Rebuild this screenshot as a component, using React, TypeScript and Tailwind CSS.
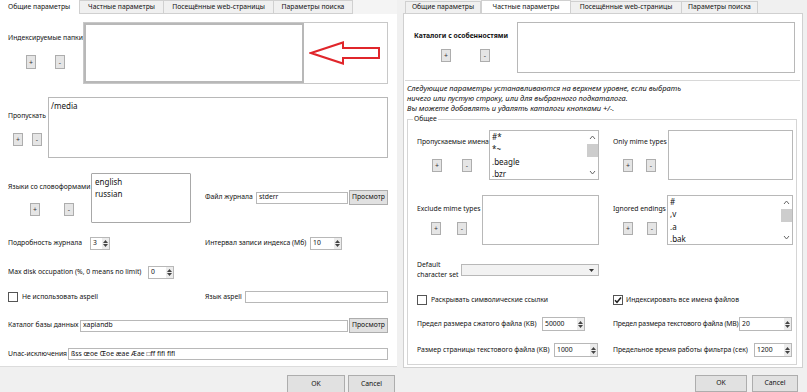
import React from "react";

function Btn({ children, className = "" }: { children: React.ReactNode; className?: string }) {
  return (
    <div
      className={`flex h-[13px] w-[10px] items-center justify-center border border-[#adadad] bg-[#e5e5e5] text-[7px] leading-none text-[#333] ${className}`}
    >
      {children}
    </div>
  );
}

function Input({ value = "", className = "" }: { value?: string; className?: string }) {
  return (
    <div
      className={`flex h-[12px] items-center overflow-hidden whitespace-nowrap border border-[#b8b8b8] bg-white pl-[2px] text-[6.8px] leading-none ${className}`}
    >
      {value}
    </div>
  );
}

function PushBtn({ label, className = "" }: { label: string; className?: string }) {
  return (
    <div
      className={`flex items-center justify-center border border-[#adadad] bg-[#e1e1e1] text-[6.8px] leading-none ${className}`}
    >
      {label}
    </div>
  );
}

function Spin({ value, className = "" }: { value: string; className?: string }) {
  return (
    <div className={`flex h-[13px] border border-[#b8b8b8] bg-white ${className}`}>
      <div className="flex flex-1 items-center pl-[2px] text-[6.8px] leading-none">{value}</div>
      <div className="flex w-[7px] flex-col items-center justify-center gap-[1px] bg-[#ececec]">
        <svg width="5" height="3" viewBox="0 0 5 3">
          <path d="M0 3 L2.5 0 L5 3 Z" fill="#444" />
        </svg>
        <svg width="5" height="3" viewBox="0 0 5 3">
          <path d="M0 0 L2.5 3 L5 0 Z" fill="#444" />
        </svg>
      </div>
    </div>
  );
}

function Check({ checked = false }: { checked?: boolean }) {
  return (
    <div className="flex h-[10px] w-[10px] items-center justify-center border border-[#555] bg-white">
      {checked && (
        <svg width="8" height="8" viewBox="0 0 8 8">
          <path d="M1 4.2 L3 6.3 L7 1.5" stroke="#222" strokeWidth="1.5" fill="none" />
        </svg>
      )}
    </div>
  );
}

function ScrollList({ items, className = "" }: { items: string[]; className?: string }) {
  return (
    <div className={`flex h-[50px] border border-[#b8b8b8] bg-white ${className}`}>
      <div className="flex-1 overflow-hidden pl-[2px] text-[8px] leading-[12.3px]">
        {items.map((it) => (
          <div key={it}>{it}</div>
        ))}
      </div>
      <div className="flex w-[12px] flex-col items-center bg-white">
        <svg width="7" height="9" viewBox="0 0 7 9" className="mt-[2px]">
          <path d="M1 6 L3.5 3 L6 6" stroke="#666" strokeWidth="1" fill="none" />
        </svg>
        <div className="mt-[2px] h-[13px] w-[11px] bg-[#cdcdcd]" />
        <div className="flex-1" />
        <svg width="7" height="9" viewBox="0 0 7 9" className="mb-[2px]">
          <path d="M1 3 L3.5 6 L6 3" stroke="#666" strokeWidth="1" fill="none" />
        </svg>
      </div>
    </div>
  );
}

const leftTabs = ["Частные параметры", "Посещённые web-страницы", "Параметры поиска"];

function LeftPanel() {
  return (
    <div className="flex h-[392px] w-[397px] flex-col bg-white">
      <div className="flex h-[14px] bg-[#f4f4f4] text-[6.8px]">
        <div className="flex w-[79px] items-center bg-white pl-[8px]">Общие параметры</div>
        <div className="flex w-[85px] items-center justify-center border border-[#d0d0d0] bg-[#f0f0f0]">
          {leftTabs[0]}
        </div>
        <div className="flex w-[110px] items-center justify-center border border-l-0 border-[#d0d0d0] bg-[#f0f0f0]">
          {leftTabs[1]}
        </div>
        <div className="flex w-[79px] items-center justify-center border border-l-0 border-[#d0d0d0] bg-[#f0f0f0]">
          {leftTabs[2]}
        </div>
      </div>

      <div className="flex flex-1 flex-col pl-[8px] text-[6.8px]">
        {/* indexed folders */}
        <div className="mt-[8px] flex h-[62px]">
          <div className="flex w-[75px] flex-col">
            <div className="mt-[11px] whitespace-nowrap leading-[9px]">Индексируемые папки</div>
            <div className="mt-[13px] flex">
              <Btn className="ml-[18px] h-[14px]">+</Btn>
              <Btn className="ml-[19px] h-[14px]">-</Btn>
            </div>
          </div>
          <div className="flex w-[305px] border border-[#c8c8c8]">
            <div className="h-full w-[220px] border-2 border-[#b8b8b8] bg-white" />
            <div className="flex flex-1 items-center pl-[5px]">
              <svg width="72" height="24" viewBox="0 0 72 24">
                <path
                  d="M2 12 L34 1.5 L34 7 L70 7 L70 17 L34 17 L34 22.5 Z"
                  fill="none"
                  stroke="#e0262b"
                  strokeWidth="2"
                  strokeLinejoin="miter"
                />
              </svg>
            </div>
          </div>
        </div>

        {/* skipped paths */}
        <div className="mt-[13px] flex h-[61px]">
          <div className="flex w-[40px] flex-col">
            <div className="mt-[14px] whitespace-nowrap leading-[9px]">Пропускать</div>
            <div className="mt-[13px] flex">
              <Btn className="ml-[5px] h-[12px]">+</Btn>
              <Btn className="ml-[9px] h-[12px]">-</Btn>
            </div>
          </div>
          <div className="w-[340px] border border-[#b8b8b8] pl-[2px] pt-[2px] text-[8px] leading-[12px]">/media</div>
        </div>

        {/* languages + log file */}
        <div className="mt-[15px] flex h-[50px]">
          <div className="flex w-[197px]">
            <div className="flex w-[83px] flex-col">
              <div className="mt-[9px] whitespace-nowrap leading-[9px]">Языки со словоформами</div>
              <div className="mt-[12px] flex">
                <Btn className="ml-[22px] h-[11px] w-[8px]">+</Btn>
                <Btn className="ml-[24px] h-[11px] w-[8px]">-</Btn>
              </div>
            </div>
            <div className="w-[100px] rounded-[1px] border border-[#a8a8a8] pl-[3px] pt-[2px] text-[8px] leading-[12px]">
              <div>english</div>
              <div>russian</div>
            </div>
          </div>
          <div className="mt-[17px] flex h-[15px] items-center">
            <div className="w-[51px] whitespace-nowrap">Файл журнала</div>
            <Input value="stderr" className="w-[92px]" />
            <PushBtn label="Просмотр" className="ml-[1px] h-[15px] w-[39px]" />
          </div>
        </div>

        {/* verbosity / interval */}
        <div className="mt-[14px] flex h-[12px] items-center">
          <div className="flex w-[197px] items-center">
            <div className="w-[82px] whitespace-nowrap">Подробность журнала</div>
            <Spin value="3" className="w-[20px]" />
          </div>
          <div className="w-[105px] whitespace-nowrap">Интервал записи индекса (Мб)</div>
          <Spin value="10" className="w-[32px]" />
        </div>

        {/* max disk */}
        <div className="mt-[17px] flex h-[12px] items-center">
          <div className="w-[140px] whitespace-nowrap">Max disk occupation (%, 0 means no limit)</div>
          <Spin value="0" className="w-[26px]" />
        </div>

        {/* aspell */}
        <div className="mt-[13px] flex h-[12px] items-center">
          <div className="flex w-[197px] items-center">
            <Check />
            <div className="ml-[4px] whitespace-nowrap">Не использовать aspell</div>
          </div>
          <div className="w-[40px] whitespace-nowrap">Язык aspell</div>
          <Input className="w-[143px]" />
        </div>

        {/* db dir */}
        <div className="mt-[15px] flex h-[15px] items-center">
          <div className="w-[72px] whitespace-nowrap">Каталог базы данных</div>
          <Input value="xapiandb" className="w-[268px]" />
          <PushBtn label="Просмотр" className="ml-[1px] h-[15px] w-[39px]" />
        </div>

        {/* unac */}
        <div className="mt-[15px] flex h-[12px] items-center">
          <div className="w-[60px] whitespace-nowrap">Unac-исключения</div>
          <Input value="ßss œoe Œoe æae Æae □ff ﬁfi ﬂfl" className="w-[320px]" />
        </div>
      </div>

      <div className="flex h-[26px] justify-end gap-[3px] border-t border-[#dcdcdc] bg-[#f0f0f0] pr-[2px] pt-[8px]">
        <PushBtn label="OK" className="h-[18px] w-[58px] bg-[#e1e1e1]" />
        <PushBtn label="Cancel" className="h-[18px] w-[47px]" />
      </div>
    </div>
  );
}

function RightPanel() {
  return (
    <div className="flex h-[392px] w-[410px] flex-col bg-[#f0f0f0] text-[6.8px]">
      <div className="ml-[8px] flex h-[13px] items-end">
        <div className="flex h-[12px] w-[76px] items-center justify-center border border-b-0 border-[#d0d0d0] bg-[#f0f0f0]">
          Общие параметры
        </div>
        <div className="flex h-[13px] w-[90px] items-center justify-center border border-b-0 border-[#d0d0d0] bg-white">
          Частные параметры
        </div>
        <div className="flex h-[12px] w-[111px] items-center justify-center border border-b-0 border-l-0 border-[#d0d0d0] bg-[#f0f0f0]">
          Посещённые web-страницы
        </div>
        <div className="flex h-[12px] w-[76px] items-center justify-center border border-b-0 border-l-0 border-[#d0d0d0] bg-[#f0f0f0]">
          Параметры поиска
        </div>
      </div>

      <div className="ml-[6px] flex h-[355px] w-[400px] flex-col border border-[#d0d0d0] bg-white">
        {/* special dirs */}
        <div className="mt-[8px] flex h-[51px] pl-[10px]">
          <div className="flex w-[103px] flex-col">
            <div className="mt-[9px] whitespace-nowrap font-bold leading-[9px]">Каталоги с особенностями</div>
            <div className="mt-[9px] flex">
              <Btn className="ml-[27px]">+</Btn>
              <Btn className="ml-[29px]">-</Btn>
            </div>
          </div>
          <div className="w-[278px] border border-[#b8b8b8]" />
        </div>

        <div className="ml-[1px] mt-[7px] h-[1px] w-[395px] bg-[#d8d8d8]" />

        <div className="mt-[2px] pl-[3px] text-[7.5px] italic leading-[10px]">
          <div>Следующие параметры устанавливаются на верхнем уровне, если выбрать</div>
          <div>ничего или пустую строку, или для выбранного подкаталога.</div>
          <div>Вы можете добавлять и удалять каталоги кнопками +/-.</div>
        </div>

        <div className="relative ml-[3px] mt-[6px] flex h-[246px] w-[390px] flex-col border border-[#d5d5d5] pl-[9px]">
          <div className="absolute -top-[6px] left-[5px] bg-white px-[1px] leading-[10px]">Общее</div>

          {/* row A */}
          <div className="mt-[10px] flex h-[50px]">
            <div className="flex w-[196px]">
              <div className="flex w-[72px] flex-col">
                <div className="mt-[7px] whitespace-nowrap leading-[9px]">Пропускаемые имена</div>
                <div className="mt-[13px] flex">
                  <Btn className="ml-[15px]">+</Btn>
                  <Btn className="ml-[20px]">-</Btn>
                </div>
              </div>
              <ScrollList items={["#*", "*~", ".beagle", ".bzr"]} className="w-[110px]" />
            </div>
            <div className="flex w-[55px] flex-col">
              <div className="mt-[7px] whitespace-nowrap leading-[9px]">Only mime types</div>
              <div className="mt-[13px] flex">
                <Btn className="ml-[10px]">+</Btn>
                <Btn className="ml-[13px]">-</Btn>
              </div>
            </div>
            <div className="w-[125px] border border-[#b8b8b8]" />
          </div>

          {/* row B */}
          <div className="mt-[15px] flex h-[50px]">
            <div className="flex w-[196px]">
              <div className="flex w-[65px] flex-col">
                <div className="mt-[9px] whitespace-nowrap leading-[9px]">Exclude mime types</div>
                <div className="mt-[9px] flex">
                  <Btn className="ml-[14px]">+</Btn>
                  <Btn className="ml-[16px]">-</Btn>
                </div>
              </div>
              <div className="w-[117px] border border-[#b8b8b8]" />
            </div>
            <div className="flex w-[54px] flex-col">
              <div className="mt-[9px] whitespace-nowrap leading-[9px]">Ignored endings</div>
              <div className="mt-[9px] flex">
                <Btn className="ml-[10px]">+</Btn>
                <Btn className="ml-[14px]">-</Btn>
              </div>
            </div>
            <ScrollList items={["#", ",v", ".a", ".bak"]} className="w-[126px]" />
          </div>

          {/* charset */}
          <div className="mt-[15px] flex h-[20px] items-center">
            <div className="w-[44px] leading-[10px]">
              <div>Default</div>
              <div className="whitespace-nowrap">character set</div>
            </div>
            <div className="flex h-[12px] w-[138px] items-center justify-end border border-[#b8b8b8] bg-[#f2f2f2] pr-[4px]">
              <svg width="5" height="3" viewBox="0 0 5 3">
                <path d="M0 0 L2.5 3 L5 0 Z" fill="#333" />
              </svg>
            </div>
          </div>

          {/* checkboxes */}
          <div className="mt-[15px] flex h-[10px] items-center">
            <div className="flex w-[196px] items-center">
              <Check />
              <div className="ml-[4px] whitespace-nowrap">Раскрывать символические ссылки</div>
            </div>
            <Check checked />
            <div className="ml-[3px] whitespace-nowrap">Индексировать все имена файлов</div>
          </div>

          {/* spin row 1 */}
          <div className="mt-[12px] flex h-[14px] items-center">
            <div className="flex w-[196px] items-center">
              <div className="w-[125px] whitespace-nowrap">Предел размера сжатого файла (KB)</div>
              <Spin value="50000" className="h-[14px] w-[43px]" />
            </div>
            <div className="w-[126px] whitespace-nowrap tracking-[-0.15px]">Предел размера текстового файла (MB)</div>
            <Spin value="20" className="h-[14px] w-[53px]" />
          </div>

          {/* spin row 2 */}
          <div className="mt-[12px] flex h-[14px] items-center">
            <div className="flex w-[196px] items-center">
              <div className="w-[137px] whitespace-nowrap">Размер страницы текстового файла (KB)</div>
              <Spin value="1000" className="h-[14px] w-[44px]" />
            </div>
            <div className="w-[141px] whitespace-nowrap">Предельное время работы фильтра (сек)</div>
            <Spin value="1200" className="h-[14px] w-[38px]" />
          </div>
        </div>
      </div>

      <div className="mt-[7px] flex justify-end gap-[5px] pr-[9px]">
        <PushBtn label="OK" className="h-[17px] w-[52px]" />
        <PushBtn label="Cancel" className="h-[17px] w-[46px]" />
      </div>
    </div>
  );
}

export default function App() {
  return (
    <div className="flex h-[392px] w-[807px] overflow-hidden bg-white font-['Noto_Sans',sans-serif] text-[#111]">
      <LeftPanel />
      <RightPanel />
    </div>
  );
}
